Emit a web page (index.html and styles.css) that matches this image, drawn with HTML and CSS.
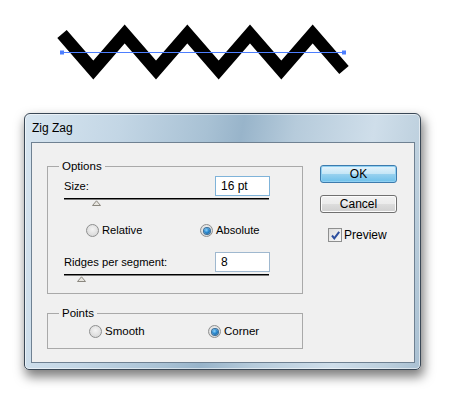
FILE: index.html
```html
<!DOCTYPE html>
<html>
<head>
<meta charset="utf-8">
<link rel="stylesheet" href="styles.css">
</head>
<body>
<svg class="art" width="449" height="113" viewBox="0 0 449 113">
  <polyline class="zig" points="62,34 93.33,70 124.67,34 156,70 187.33,34 218.67,70 250,34 281.33,70 312.67,34 344,70"/>
  <line class="path" x1="62" y1="52.5" x2="344" y2="52.5"/>
  <rect class="handle" x="60" y="50.5" width="4" height="4"/>
  <rect class="handle" x="342" y="50.5" width="4" height="4"/>
</svg>
<div class="window">
  <div class="titlebar"><span class="title">Zig Zag</span></div>
  <div class="client">
    <div class="left">
      <fieldset class="group options">
        <legend>Options</legend>
        <div class="field-row first">
          <span class="label">Size:</span>
          <div class="textbox">16 pt</div>
        </div>
        <div class="slider">
          <div class="track"></div>
          <svg class="thumb" style="margin-left:28px" width="9" height="6" viewBox="0 0 9 6"><polygon points="0.5,5.5 4.5,0.8 8.5,5.5"/></svg>
        </div>
        <div class="radio-row opts">
          <label class="radio rel"><span class="dot"></span>Relative</label>
          <label class="radio"><span class="dot on"></span>Absolute</label>
        </div>
        <div class="field-row second">
          <span class="label">Ridges per segment:</span>
          <div class="textbox">8</div>
        </div>
        <div class="slider">
          <div class="track"></div>
          <svg class="thumb" style="margin-left:13px" width="9" height="6" viewBox="0 0 9 6"><polygon points="0.5,5.5 4.5,0.8 8.5,5.5"/></svg>
        </div>
      </fieldset>
      <fieldset class="group points">
        <legend>Points</legend>
        <div class="radio-row pts">
          <label class="radio smooth"><span class="dot"></span>Smooth</label>
          <label class="radio"><span class="dot on"></span>Corner</label>
        </div>
      </fieldset>
    </div>
    <div class="right">
      <div class="btn ok">OK</div>
      <div class="btn cancel">Cancel</div>
      <label class="check">
        <span class="box"><svg width="11" height="11" viewBox="0 0 11 11"><path d="M2 5.5 L4.3 8.3 L9.2 1.8" /></svg></span>
        Preview
      </label>
    </div>
  </div>
</div>
</body>
</html>
```
FILE: styles.css
```css
html, body {
  margin: 0;
  padding: 0;
  background: #ffffff;
}
body {
  width: 449px;
  height: 398px;
  overflow: hidden;
  font-family: "Liberation Sans", Arial, sans-serif;
  font-size: 11.2px;
  color: #000;
}
.art {
  display: block;
}
.zig {
  fill: none;
  stroke: #000;
  stroke-width: 12.5;
  stroke-linejoin: miter;
  stroke-miterlimit: 10;
  stroke-linecap: butt;
}
.path {
  stroke: #4d7fff;
  stroke-width: 1;
}
.handle {
  fill: #4d7fff;
}

.window {
  margin-left: 24px;
  width: 395px;
  height: 255px;
  border: 1px solid #3a4856;
  border-radius: 6px 6px 5px 5px;
  background: linear-gradient(100deg, #d7e5f0 0%, #c3d6e5 22%, #a8c1d4 42%, #98b4ca 50%, #b6cbdb 62%, #cfdeea 80%, #bccfdd 92%, #a9c0d2 100%);
  box-shadow: 2px 6px 11px 1px rgba(0, 0, 0, 0.5), inset 0 0 0 1px rgba(255, 255, 255, 0.55);
  display: flex;
  flex-direction: column;
}
.titlebar {
  height: 28px;
  padding-left: 7px;
  box-sizing: border-box;
  padding-top: 7px;
}
.title {
  font-size: 12px;
  line-height: 14px;
  color: #000;
}
.client {
  margin: 0 5px 6px 6px;
  flex: 1;
  background: #f0f0f0;
  border: 1px solid #6f8192;
  display: flex;
}
.left {
  padding-left: 15px;
  width: 256px;
}

.group {
  margin: 0;
  border: 1px solid #a9a9a9;
  padding: 0 32px 0 16px;
  min-width: 0;
}
.group legend {
  margin-left: -5px;
  padding: 0 3px;
  line-height: 12px;
  font-size: 11.5px;
}
.options {
  margin-top: 17px;
  padding-bottom: 11px;
}
.points {
  margin-top: 13px;
  padding-bottom: 10px;
}

.field-row {
  display: flex;
  align-items: center;
  justify-content: space-between;
  height: 20px;
}
.field-row.first {
  margin-top: 4px;
}
.field-row.second {
  margin-top: 15px;
}
.textbox {
  height: 18px;
  border: 1px solid #9fb8cf;
  background: #fff;
  line-height: 18px;
  padding-left: 5px;
  box-sizing: content-box;
  font-size: 12px;
  width: 48px;
}
.field-row.first .textbox {
  border-color: #7fb3d9;
}

.slider {
  margin-top: 2px;
  margin-right: 1px;
}
.track {
  height: 1px;
  border-top: 1px solid #000;
  background: #7a7a7a;
}
.thumb {
  display: block;
}
.thumb polygon {
  fill: #e8e6e0;
  stroke: #8a877f;
  stroke-width: 1;
}

.radio-row {
  display: flex;
  align-items: center;
  height: 13px;
}
.radio-row.opts {
  margin-top: 18px;
  padding-left: 22px;
}
.radio-row.pts {
  margin-top: 6px;
  padding-left: 25px;
  font-size: 11.5px;
}
.radio {
  display: flex;
  align-items: center;
  gap: 3px;
  line-height: 13px;
}
.radio.rel {
  width: 114px;
}
.radio.smooth {
  width: 119px;
}
.dot {
  width: 11px;
  height: 11px;
  border-radius: 50%;
  border: 1px solid #8e8f8f;
  background: radial-gradient(circle at 50% 40%, #f4f4f4 0%, #dcdcdc 70%, #cfcfcf 100%);
  display: flex;
  align-items: center;
  justify-content: center;
}
.dot.on::after {
  content: "";
  width: 6px;
  height: 6px;
  border-radius: 50%;
  background: radial-gradient(circle at 40% 35%, #8fd3fb 0%, #2b8ad0 45%, #0b4f8a 100%);
  box-shadow: 0 0 0 1px #3a6e98;
}

.right {
  margin-left: 17px;
  width: 77px;
  display: flex;
  flex-direction: column;
}
.btn {
  height: 16px;
  border-radius: 3px;
  text-align: center;
  line-height: 16px;
  font-size: 12px;
}
.btn.ok {
  margin-top: 22px;
  border: 1px solid #3d7bad;
  background: linear-gradient(#e5f4fc 0%, #c4e5f6 50%, #98d1ef 51%, #6dc0ea 100%);
  box-shadow: inset 0 0 0 1px #8fd0f2;
}
.btn.cancel {
  margin-top: 12px;
  border: 1px solid #707070;
  background: linear-gradient(#f2f2f2 0%, #ebebeb 50%, #dddddd 51%, #cfcfcf 100%);
  box-shadow: inset 0 0 0 1px #fcfcfc;
}
.check {
  margin-top: 15px;
  margin-left: 8px;
  display: flex;
  align-items: center;
  gap: 2px;
  font-size: 12px;
  line-height: 14px;
}
.box {
  width: 12px;
  height: 12px;
  border: 1px solid #8e8f8f;
  background: linear-gradient(135deg, #dedede, #f8f8f8);
  display: flex;
  align-items: center;
  justify-content: center;
}
.box path {
  fill: none;
  stroke: #2d4f9e;
  stroke-width: 2;
}
```
